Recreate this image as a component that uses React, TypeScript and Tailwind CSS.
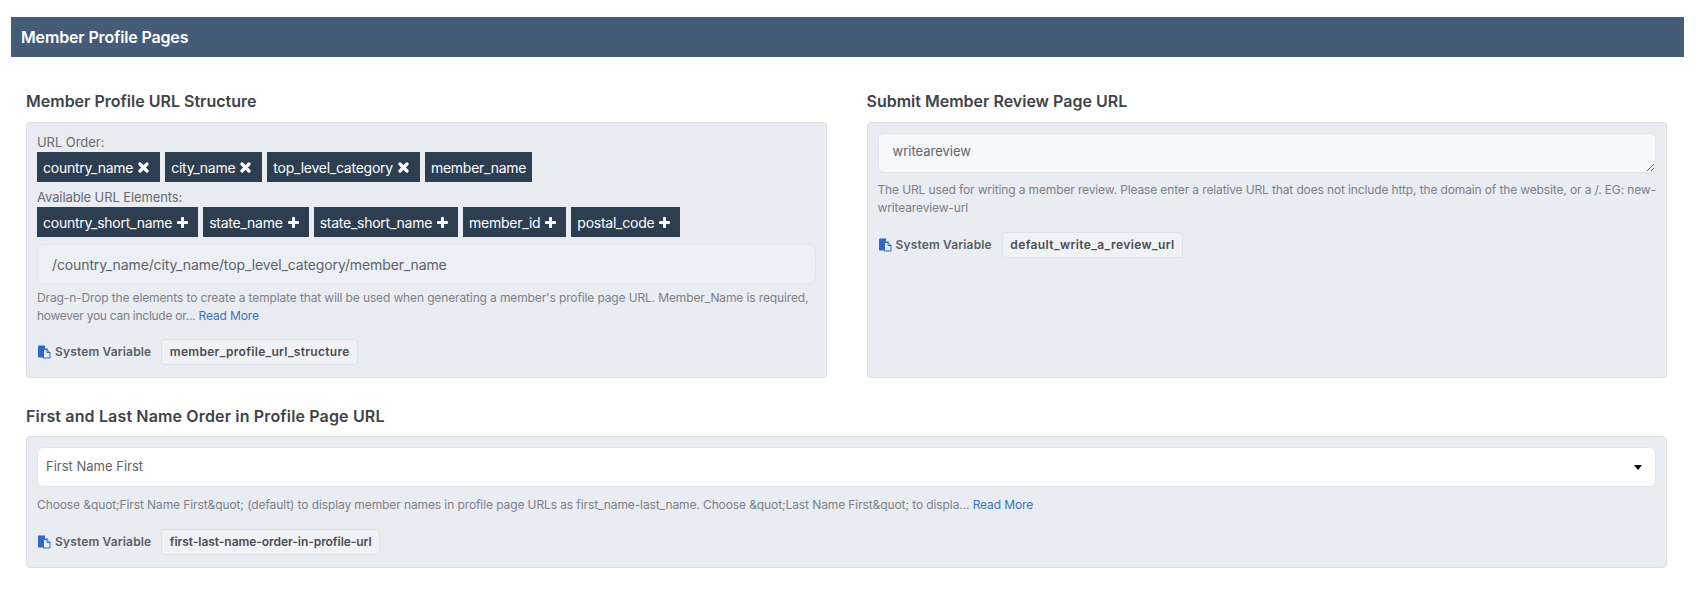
import React from "react";

function XIcon() {
  return (
    <svg viewBox="0 0 11 11" className="mr-[5px] h-[11px] w-[11px]">
      <path d="M2 2l7 7M9 2l-7 7" stroke="currentColor" strokeWidth="3.2" strokeLinecap="round" fill="none" />
    </svg>
  );
}

function PlusIcon() {
  return (
    <svg viewBox="0 0 11 11" className="mr-[4px] h-[11px] w-[11px]">
      <path d="M5.5 1.2v8.6M1.2 5.5h8.6" stroke="currentColor" strokeWidth="3" strokeLinecap="round" fill="none" />
    </svg>
  );
}

function Chip({ label, icon }: { label: string; icon?: "x" | "plus" }) {
  return (
    <span className="inline-flex h-[30px] items-center gap-[5px] bg-[#2d3e50] px-[6px] text-[14px] tracking-[-0.25px] text-white">
      {label}
      {icon === "x" && <XIcon />}
      {icon === "plus" && <PlusIcon />}
    </span>
  );
}

function CopyIcon() {
  return (
    <svg viewBox="0 0 13 14" className="ml-[1px] h-[14px] w-[13px]">
      <path d="M0 1.5A1 1 0 0 1 1 .5h6v3h3v1H5.5v8H1a1 1 0 0 1-1-1z" fill="#2f68c8" />
      <path d="M5.5 4.5H9l3 3V13H5.5z" fill="#e9ecf1" stroke="#2f68c8" strokeWidth="1" />
      <path d="M9 4.5v3h3" fill="none" stroke="#2f68c8" strokeWidth="1" />
    </svg>
  );
}

function SystemVariable({ name, pillClass, className }: { name: string; pillClass: string; className: string }) {
  return (
    <div className={"flex items-center " + className}>
      <CopyIcon />
      <span className="ml-[4px] text-[12px] font-semibold tracking-[0.15px] text-[#5a5f66]">System Variable</span>
      <span className={"ml-[10px] rounded-[4px] border border-[#dfe1e6] bg-[#f1f2f5] px-[7.5px] py-[3px] text-[12px] leading-[18px] font-semibold text-[#4a4d52] " + pillClass}>
        {name}
      </span>
    </div>
  );
}

function Help({ className, children }: { className: string; children: React.ReactNode }) {
  return <p className={"text-[12px] leading-[18px] text-[#7d8187] " + className}>{children}</p>;
}

function Panel({ className, children }: { className?: string; children: React.ReactNode }) {
  return (
    <div className={"rounded-[4px] border border-[#dcdfe4] bg-[#e9ecf1] px-[10px] pb-[12px] " + (className ?? "")}>{children}</div>
  );
}

function Title({ className, children }: { className: string; children: React.ReactNode }) {
  return <h3 className={"text-[16px] leading-[22px] font-semibold text-[#3f4347] " + className}>{children}</h3>;
}

export default function App() {
  return (
    <div className="h-[590px] bg-white pt-[17px] font-['Inter','Lato',sans-serif] text-[#555]">
      <div className="ml-[11px] mr-[12px]">
        <div className="flex h-[40px] items-center bg-[#445c77] px-[10px] text-[16px] font-semibold tracking-[-0.15px] text-white">
          Member Profile Pages
        </div>
        <div className="pl-[15px] pr-[17px] pt-[33px]">
          <div className="grid grid-cols-2 gap-x-[40px]">
            <section className="flex flex-col">
              <Title className="mb-[10px]">Member Profile URL Structure</Title>
              <Panel className="h-[256px] pt-[9px]">
                <div className="text-[13px] leading-[20px] tracking-[-0.05px] text-[#666b72]">URL Order:</div>
                <div className="flex gap-[5px]">
                  <Chip label="country_name" icon="x" />
                  <Chip label="city_name" icon="x" />
                  <Chip label="top_level_category" icon="x" />
                  <Chip label="member_name" />
                </div>
                <div className="mt-[6px] text-[13px] leading-[19px] tracking-[-0.1px] text-[#666b72]">Available URL Elements:</div>
                <div className="flex gap-[5px]">
                  <Chip label="country_short_name" icon="plus" />
                  <Chip label="state_name" icon="plus" />
                  <Chip label="state_short_name" icon="plus" />
                  <Chip label="member_id" icon="plus" />
                  <Chip label="postal_code" icon="plus" />
                </div>
                <div className="mt-[7px] flex h-[40px] items-center rounded-[6px] border border-[#e2e5ea] bg-[#eceff3] px-[14px] text-[14px] tracking-[-0.12px] text-[#5f6369]">
                  /country_name/city_name/top_level_category/member_name
                </div>
                <Help className="mt-[5px] tracking-[-0.13px]">
                  Drag-n-Drop the elements to create a template that will be used when generating a member's profile page URL. Member_Name is required, <span className="tracking-[-0.27px]">however you can include or...</span> <span className="text-[#3b73c4]">Read More</span>
                </Help>
                <SystemVariable className="mt-[14px]" pillClass="tracking-[0.3px]" name="member_profile_url_structure" />
              </Panel>
            </section>
            <section className="flex flex-col">
              <Title className="mb-[10px]">Submit Member Review Page URL</Title>
              <Panel className="h-[256px] pt-[10px]">
                <textarea
                  readOnly
                  defaultValue="writeareview"
                  className="block h-[40px] w-full rounded-[6px] border border-[#e2e5ea] bg-[#f7f8fa] px-[14px] py-[8px] text-[13px] text-[#5f6369] outline-none"
                />
                <Help className="mt-[8px] tracking-[-0.13px]">
                  The URL used for writing a member review. Please enter a relative URL that does not include http, the domain of the website, or a /. EG: new-writeareview-url
                </Help>
                <SystemVariable className="mt-[15px]" pillClass="tracking-[0.4px]" name="default_write_a_review_url" />
              </Panel>
            </section>
          </div>
          <section className="mt-[27px]">
            <Title className="mb-[9px] tracking-[0.15px]">First and Last Name Order in Profile Page URL</Title>
            <Panel className="h-[132px] pt-[10px]">
              <div className="flex h-[40px] items-center justify-between rounded-[6px] border border-[#e2e5ea] bg-white pr-[13px] pl-[8px] text-[13px] text-[#5f6369]">
                <span>First Name First</span>
                <svg viewBox="0 0 8 5" className="h-[5px] w-[8px] text-black"><path d="M0 0h8L4 5z" fill="currentColor" /></svg>
              </div>
              <Help className="mt-[9px] tracking-[-0.1px]">
                Choose &amp;quot;First Name First&amp;quot; (default) to display member names in profile page URLs as first_name-last_name. Choose &amp;quot;Last Name First&amp;quot; to displa... <span className="text-[#3b73c4]">Read More</span>
              </Help>
              <SystemVariable className="mt-[15px]" pillClass="tracking-[-0.05px]" name="first-last-name-order-in-profile-url" />
            </Panel>
          </section>
        </div>
      </div>
    </div>
  );
}
